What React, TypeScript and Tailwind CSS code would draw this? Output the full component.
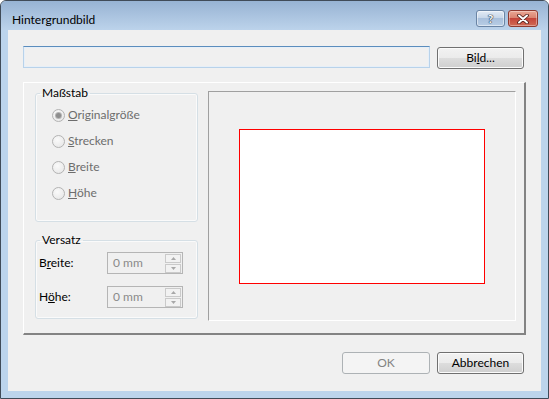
import React from "react";

const Btn = ({ children, w, disabled }: { children: React.ReactNode; w: string; disabled?: boolean }) => (
  <div
    className={
      disabled
        ? `${w} h-[22px] flex items-center justify-center rounded-[3px] border border-[#adb2b5] bg-[#f4f4f4] text-[#838383]`
        : `${w} h-[22px] flex items-center justify-center rounded-[3px] border border-[#707070] bg-[linear-gradient(#f2f2f2,#ebebeb_50%,#dddddd_50%,#cfcfcf)] shadow-[inset_0_0_0_1px_#fbfbfb] text-black`
    }
  >
    {children}
  </div>
);

const Radio = ({ checked, label }: { checked?: boolean; label: React.ReactNode }) => (
  <div className="h-[16px] flex items-center gap-[3px]">
    <div className="w-[13px] h-[13px] rounded-full border border-[#b3b3b3] bg-[radial-gradient(circle_at_40%_35%,#fafafa,#e4e4e4)] flex items-center justify-center">
      {checked && <div className="w-[5px] h-[5px] rounded-full bg-[#8e8e8e] shadow-[0_0_0_1px_#b5b5b5]" />}
    </div>
    <span className="text-[#6d6d6d]">{label}</span>
  </div>
);

const Spin = () => (
  <div className="w-[76px] h-[22px] border border-[#b5b5b5] bg-[#f0f0f0] flex items-center">
    <span className="pl-[5px] text-[#8a8a8a] flex-1">0 mm</span>
    <div className="flex flex-col gap-[1px] mr-[1px]">
      <div className="w-[16px] h-[9px] border border-[#cacaca] bg-[#f2f2f2] flex items-center justify-center">
        <svg width="5" height="3" viewBox="0 0 5 3"><path d="M0 3 L2.5 0 L5 3 Z" fill="#a8a8a8" /></svg>
      </div>
      <div className="w-[16px] h-[9px] border border-[#cacaca] bg-[#f2f2f2] flex items-center justify-center">
        <svg width="5" height="3" viewBox="0 0 5 3"><path d="M0 0 L2.5 3 L5 0 Z" fill="#a8a8a8" /></svg>
      </div>
    </div>
  </div>
);

export default function App() {
  return (
    <div className="w-[549px] h-[399px] bg-white font-['Lato',sans-serif] text-[12px] leading-[16px] text-black">
      <div className="w-full h-full flex flex-col rounded-t-[6px] border border-[#404b58] bg-[#bcd4ec] overflow-hidden">
        <div className="h-[29px] shrink-0 flex items-start pl-[11px] pr-[10px] bg-[linear-gradient(#97b3d3,#aac3df_50%,#bcd3eb)]">
          <span className="mt-[11px] text-black">Hintergrundbild</span>
          <div className="ml-auto flex gap-[3px] mt-[9px]">
            <div className="w-[29px] h-[17px] rounded-[3px] border border-[#6a84a4] bg-[linear-gradient(#e3ebf5,#c5d5e8_50%,#a9c0dc_50%,#b8cde5)] shadow-[inset_0_0_0_1px_rgba(255,255,255,0.5)] flex items-center justify-center">
              <span className="text-white font-bold text-[12px] leading-[12px] [text-shadow:0_0_1px_#1d2c40,0_0_1px_#1d2c40,0_0_1px_#1d2c40]">?</span>
            </div>
            <div className="w-[30px] h-[17px] rounded-[3px] border border-[#8e3a30] bg-[linear-gradient(#eaa794,#d9806d_50%,#c5453a_50%,#d06a55)] shadow-[inset_0_0_0_1px_rgba(255,255,255,0.35)] flex items-center justify-center">
              <svg width="12" height="10" viewBox="0 0 12 10">
                <path d="M2 1.5 L10 8.5 M10 1.5 L2 8.5" stroke="#4a1a15" strokeWidth="3.6" strokeLinecap="round" />
                <path d="M2 1.5 L10 8.5 M10 1.5 L2 8.5" stroke="#ffffff" strokeWidth="2" strokeLinecap="round" />
              </svg>
            </div>
          </div>
        </div>
        <div className="flex-1 mx-[7px] mb-[7px] bg-[#f0f0f0] px-[15px] pt-[16px] flex flex-col">
          <div className="flex items-start">
            <div className="w-[407px] h-[22px] border border-[#b8d2ea] border-t-[#5b8dbd] bg-[#f0f0f0] shadow-[inset_0_0_0_1px_#e6eff8]" />
            <div className="ml-[7px] mt-[1px]">
              <Btn w="w-[87px]">
                Bi<span className="underline">l</span>d...
              </Btn>
            </div>
          </div>
          <div className="mt-[13px] w-[503px] h-[253px] border-t border-l border-r-2 border-b-2 border-t-white border-l-white border-r-[#838383] border-b-[#838383] flex items-start pl-[11px] pt-[2px]">
            <div className="w-[163px] flex flex-col">
              <fieldset className="h-[137px] rounded-[3px] border border-[#d5dfe5] shadow-[inset_0_0_0_1px_#fafafa]">
                <legend className="ml-[4px] px-[2px] leading-[16px]">Maßstab</legend>
                <div className="flex flex-col gap-[10px] pl-[16px] pt-[6px]">
                  <Radio checked label={<><span className="underline">O</span>riginalgröße</>} />
                  <Radio label={<><span className="underline">S</span>trecken</>} />
                  <Radio label={<><span className="underline">B</span>reite</>} />
                  <Radio label={<><span className="underline">H</span>öhe</>} />
                </div>
              </fieldset>
              <fieldset className="mt-[10px] h-[87px] rounded-[3px] border border-[#d5dfe5] shadow-[inset_0_0_0_1px_#fafafa]">
                <legend className="ml-[4px] px-[2px] leading-[16px]">Versatz</legend>
                <div className="flex flex-col gap-[12px] pl-[3px] pt-[4px]">
                  <div className="flex items-center">
                    <span className="w-[68px]">B<span className="underline">r</span>eite:</span>
                    <Spin />
                  </div>
                  <div className="flex items-center">
                    <span className="w-[68px]">H<span className="underline">ö</span>he:</span>
                    <Spin />
                  </div>
                </div>
              </fieldset>
            </div>
            <div className="ml-[10px] mt-[6px] w-[308px] h-[230px] border border-t-[#a0a0a0] border-l-[#a0a0a0] border-r-white border-b-white flex justify-center items-start">
              <div className="mt-[37px] w-[246px] h-[155px] bg-[#ff0000] p-[1px] flex">
                <div className="flex-1 bg-white" />
              </div>
            </div>
          </div>
          <div className="mt-[17px] flex justify-end gap-[7px] pr-[2px]">
            <Btn w="w-[88px]" disabled>OK</Btn>
            <Btn w="w-[87px]">Abbrechen</Btn>
          </div>
        </div>
      </div>
    </div>
  );
}
